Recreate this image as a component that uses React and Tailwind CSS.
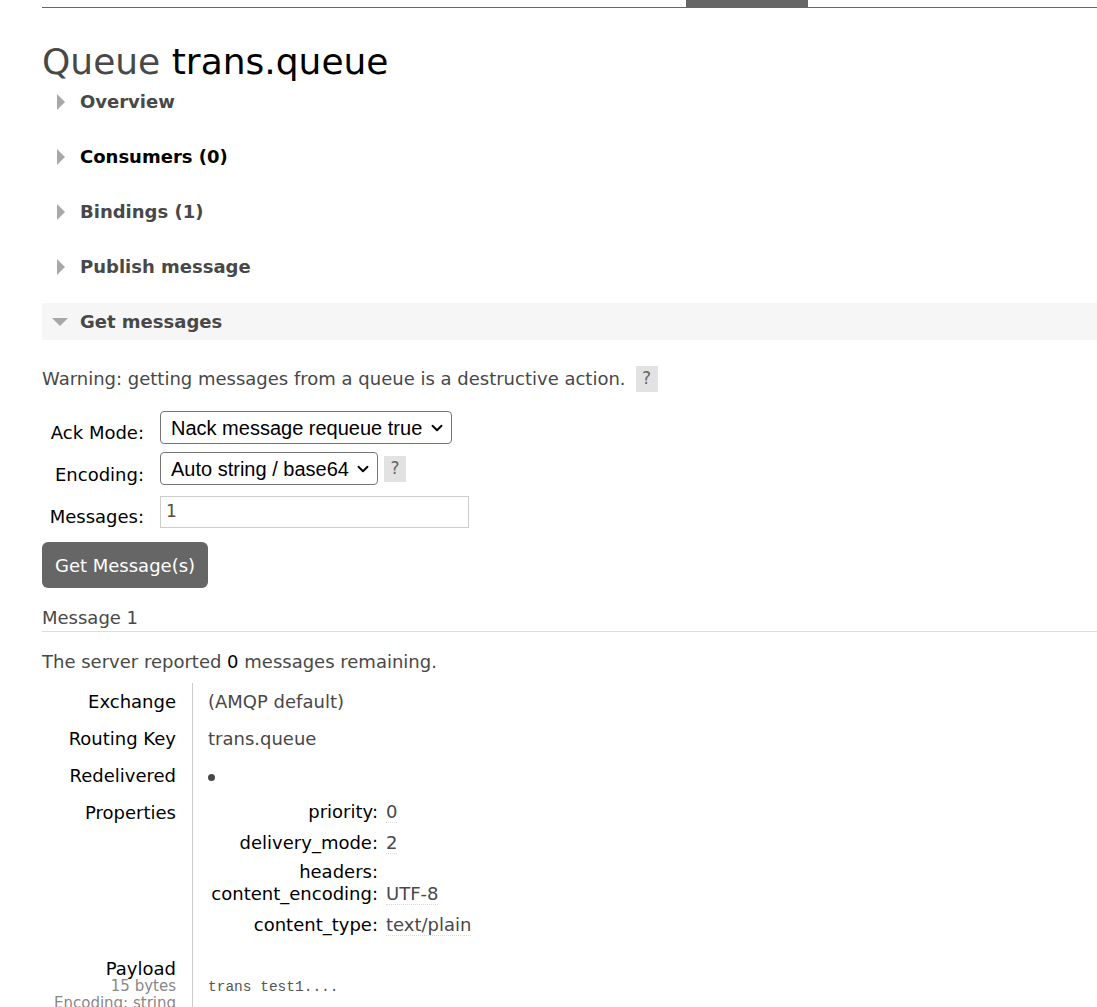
import { ChevronDown } from 'lucide-react';

const verdana = { fontFamily: '"DejaVu Sans", Verdana, sans-serif' };

function Triangle({ open }) {
  if (open) {
    return (
      <svg width="16" height="10" viewBox="0 0 16 10" className="mr-[12px]">
        <polygon points="0,1 16,1 8,9" fill="#a8a8a8" />
      </svg>
    );
  }
  return (
    <svg width="10" height="16" viewBox="0 0 10 16" className="ml-[14px] mr-[14px]">
      <polygon points="1,0 9,8 1,16" fill="#a8a8a8" />
    </svg>
  );
}

function Section({ title, open = false, dark = false }) {
  return (
    <div
      className={`flex h-[37px] items-center ${open ? 'bg-[#f6f6f6] pl-[10px]' : ''}`}
    >
      <Triangle open={open} />
      <span className={`text-[18px] font-bold ${dark ? 'text-black' : 'text-[#484848]'}`}>
        {title}
      </span>
    </div>
  );
}

function Help({ gap = 'ml-[6px]' }) {
  return (
    <span className={`${gap} inline-flex h-[26px] w-[22px] items-center justify-center bg-[#e2e2e2] text-[17px] text-[#666]`}>
      ?
    </span>
  );
}

function Select({ value, width }) {
  return (
    <div
      className={`flex h-[33px] items-center justify-between rounded-[4px] border border-[#767676] bg-white pl-[10px] pr-[5px] text-[20px] text-black ${width}`}
      style={{ fontFamily: '"Liberation Sans", Arial, sans-serif' }}
    >
      <span>{value}</span>
      <ChevronDown size={18} strokeWidth={2.5} />
    </div>
  );
}

function Prop({ name, value, h }) {
  return (
    <div className={`flex ${h}`}>
      <div className="w-[170px] text-right text-black">{name}:</div>
      <div className="pl-[8px] text-[#484848]">
        {value && <span className="border-b border-dotted border-[#d8d8d8]">{value}</span>}
      </div>
    </div>
  );
}

export default function App() {
  return (
    <div className="min-h-screen overflow-hidden bg-white text-[18px] text-[#484848]" style={verdana}>
      <div className="ml-[42px] flex h-[8px] border-b border-[#666]">
        <div className="ml-[644px] w-[122px] bg-[#666]" />
      </div>

      <div className="pl-[42px]">
        <h1 className="mt-[33px] text-[36px] leading-[42px] text-[#484848]">
          Queue <span className="text-black">trans.queue</span>
        </h1>

        <div className="flex flex-col gap-[18px]">
          <Section title="Overview" />
          <Section title="Consumers (0)" dark />
          <Section title="Bindings (1)" />
          <Section title="Publish message" />
          <Section title="Get messages" open />
        </div>

        <div className="mt-[25px] flex items-center">
          <span>Warning: getting messages from a queue is a destructive action.</span>
          <Help gap="ml-[10px]" />
        </div>

        <div className="mt-[19px] flex flex-col text-black">
          <div className="flex h-[33px] items-start">
            <label className="w-[102px] pt-[11px] text-right leading-[22px]">Ack Mode:</label>
            <div className="ml-[16px]">
              <Select value="Nack message requeue true" width="w-[292px]" />
            </div>
          </div>
          <div className="mt-[8px] flex h-[33px] items-start">
            <label className="w-[102px] pt-[12px] text-right leading-[22px]">Encoding:</label>
            <div className="ml-[16px] flex items-center">
              <Select value="Auto string / base64" width="w-[218px]" />
              <Help />
            </div>
          </div>
          <div className="mt-[11px] flex h-[32px] items-start">
            <label className="w-[102px] pt-[10px] text-right leading-[22px]">Messages:</label>
            <div className="ml-[16px] flex h-[32px] w-[309px] items-start border border-[#cccccc] pl-[5px] pt-[2px] text-[17px] text-[#5a4a3a]">
              1
            </div>
          </div>
        </div>

        <button
          type="button"
          className="mt-[14px] h-[46px] w-[166px] rounded-[6px] bg-[#666] text-[18px] text-white"
          style={verdana}
        >
          Get Message(s)
        </button>

        <div className="mt-[18px] border-b border-[#dddddd] pb-[1px] leading-[24px]">Message 1</div>

        <p className="mt-[18px] leading-[24px]">
          The server reported <span className="text-black">0</span> messages remaining.
        </p>

        <div className="mt-[9px] flex">
          <div className="w-[150px] pr-[16px] text-right text-black">
            <div className="flex h-[37px] items-center justify-end">Exchange</div>
            <div className="flex h-[37px] items-center justify-end">Routing Key</div>
            <div className="flex h-[37px] items-center justify-end">Redelivered</div>
            <div className="h-[165px] pt-[5px]">Properties</div>
            <div className="leading-[19px]">Payload</div>
            <div className="text-[15px] leading-[17px] text-[#888]">15 bytes</div>
            <div className="text-[15px] leading-[17px] text-[#888]">Encoding: string</div>
          </div>
          <div className="border-l border-[#cccccc] pl-[15px]">
            <div className="flex h-[37px] items-center">(AMQP default)</div>
            <div className="flex h-[37px] items-center">trans.queue</div>
            <div className="flex h-[37px] items-center pt-[4px]">
              <span className="inline-block h-[7px] w-[7px] rounded-full bg-[#484848]" />
            </div>
            <div className="h-[165px] pt-[7px] leading-[22px]">
              <Prop name="priority" value="0" h="h-[31px]" />
              <Prop name="delivery_mode" value="2" h="h-[29px]" />
              <Prop name="headers" value="" h="h-[22px]" />
              <Prop name="content_encoding" value="UTF-8" h="h-[31px]" />
              <Prop name="content_type" value="text/plain" h="h-[31px]" />
            </div>
            <div
              className="pt-[18px] text-[14.5px] text-[#555]"
              style={{ fontFamily: '"Liberation Mono", "Courier New", monospace' }}
            >
              trans test1....
            </div>
          </div>
        </div>
      </div>
    </div>
  );
}
